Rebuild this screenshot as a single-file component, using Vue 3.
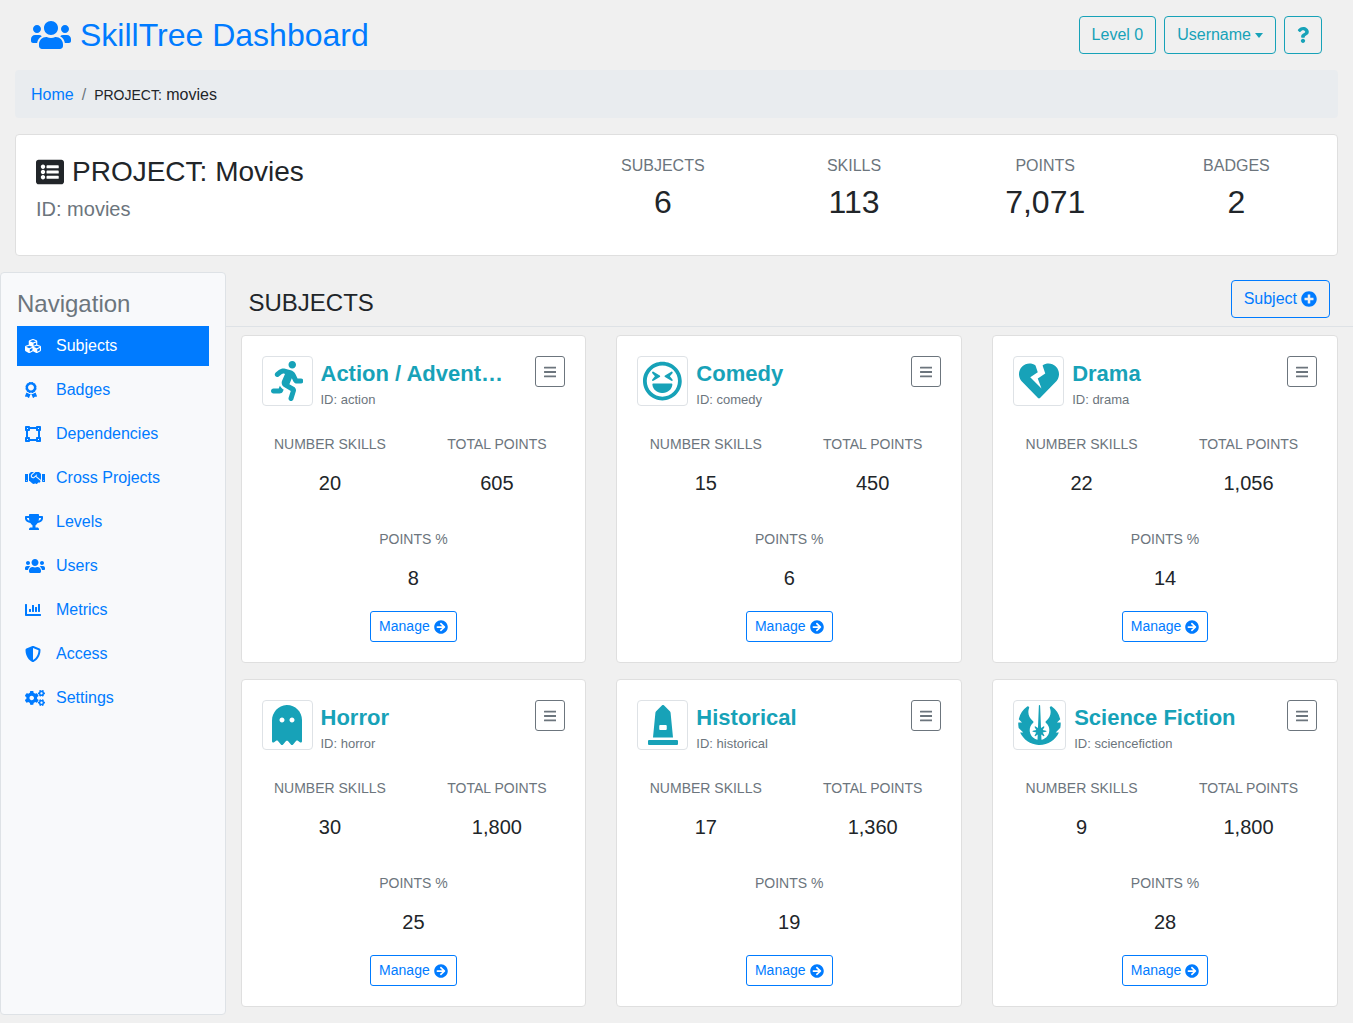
<script setup>
const icons = {
  users: { w: 640, d: 'M96 224c35.3 0 64-28.7 64-64s-28.7-64-64-64-64 28.7-64 64 28.7 64 64 64zm448 0c35.3 0 64-28.7 64-64s-28.7-64-64-64-64 28.7-64 64 28.7 64 64 64zm32 32h-64c-17.6 0-33.5 7.1-45.1 18.6 40.3 22.1 68.9 62 75.1 109.4h66c17.7 0 32-14.3 32-32v-32c0-35.3-28.7-64-64-64zm-256 0c61.9 0 112-50.1 112-112S381.9 32 320 32 208 82.1 208 144s50.1 112 112 112zm76.8 32h-8.3c-20.8 10-43.9 16-68.5 16s-47.6-6-68.5-16h-8.3C179.6 288 128 339.6 128 403.2V432c0 26.5 21.5 48 48 48h288c26.5 0 48-21.5 48-48v-28.8c0-63.6-51.6-115.2-115.2-115.2zm-223.7-13.4C161.5 263.1 145.6 256 128 256H64c-35.3 0-64 28.7-64 64v32c0 17.7 14.3 32 32 32h65.9c6.3-47.4 34.9-87.3 75.2-109.4z' },
  question: { w: 384, d: 'M202.021 0C122.202 0 70.503 32.703 29.914 91.026c-7.363 10.58-5.093 25.086 5.178 32.874l43.138 32.709c10.373 7.865 25.132 6.026 33.253-4.148 25.049-31.381 43.63-49.449 82.757-49.449 30.764 0 68.816 19.799 68.816 49.631 0 22.552-18.617 34.134-48.993 51.164-35.423 19.86-82.299 44.576-82.299 106.405V320c0 13.255 10.745 24 24 24h72.471c13.255 0 24-10.745 24-24v-5.773c0-42.86 125.268-44.645 125.268-160.627C377.504 66.256 286.902 0 202.021 0zM192 373.459c-38.196 0-69.271 31.075-69.271 69.271 0 38.195 31.075 69.27 69.271 69.27s69.271-31.075 69.271-69.271-31.075-69.27-69.271-69.27z' },
  bars: { w: 448, d: 'M16 132h416c8.837 0 16-7.163 16-16V76c0-8.837-7.163-16-16-16H16C7.163 60 0 67.163 0 76v40c0 8.837 7.163 16 16 16zm0 160h416c8.837 0 16-7.163 16-16v-40c0-8.837-7.163-16-16-16H16c-8.837 0-16 7.163-16 16v40c0 8.837 7.163 16 16 16zm0 160h416c8.837 0 16-7.163 16-16v-40c0-8.837-7.163-16-16-16H16c-8.837 0-16 7.163-16 16v40c0 8.837 7.163 16 16 16z' },
  arrowCircle: { w: 512, d: 'M256 8c137 0 248 111 248 248S393 504 256 504 8 393 8 256 119 8 256 8zm-28.9 143.6l75.5 72.4H120c-13.3 0-24 10.7-24 24v16c0 13.3 10.7 24 24 24h182.6l-75.5 72.4c-9.7 9.3-9.9 24.8-.4 34.3l11 10.9c9.4 9.4 24.6 9.4 33.9 0L404.3 273c9.4-9.4 9.4-24.6 0-33.9L271.6 106.3c-9.4-9.4-24.6-9.4-33.9 0l-11 10.9c-9.5 9.6-9.3 25.1.4 34.4z' },
  plusCircle: { w: 512, d: 'M256 8C119 8 8 119 8 256s111 248 248 248 248-111 248-248S393 8 256 8zm144 276c0 6.6-5.4 12-12 12h-92v92c0 6.6-5.4 12-12 12h-56c-6.6 0-12-5.4-12-12v-92h-92c-6.6 0-12-5.4-12-12v-56c0-6.6 5.4-12 12-12h92v-92c0-6.6 5.4-12 12-12h56c6.6 0 12 5.4 12 12v92h92c6.6 0 12 5.4 12 12v56z' },
  listAlt: { w: 512, d: 'M464 480H48c-26.51 0-48-21.49-48-48V80c0-26.51 21.49-48 48-48h416c26.51 0 48 21.49 48 48v352c0 26.51-21.49 48-48 48zM128 120c-22.091 0-40 17.909-40 40s17.909 40 40 40 40-17.909 40-40-17.909-40-40-40zm0 96c-22.091 0-40 17.909-40 40s17.909 40 40 40 40-17.909 40-40-17.909-40-40-40zm0 96c-22.091 0-40 17.909-40 40s17.909 40 40 40 40-17.909 40-40-17.909-40-40-40zm288-136v-32c0-6.627-5.373-12-12-12H204c-6.627 0-12 5.373-12 12v32c0 6.627 5.373 12 12 12h200c6.627 0 12-5.373 12-12zm0 96v-32c0-6.627-5.373-12-12-12H204c-6.627 0-12 5.373-12 12v32c0 6.627 5.373 12 12 12h200c6.627 0 12-5.373 12-12zm0 96v-32c0-6.627-5.373-12-12-12H204c-6.627 0-12 5.373-12 12v32c0 6.627 5.373 12 12 12h200c6.627 0 12-5.373 12-12z' },
  cubes: { w: 512, d: 'M488.6 250.2L392 214V105.5c0-15-9.3-28.4-23.4-33.7l-100-37.5c-8.1-3.1-17.1-3.1-25.3 0l-100 37.5c-14.1 5.3-23.4 18.7-23.4 33.7V214l-96.6 36.2C9.3 255.5 0 268.9 0 283.9V394c0 13.6 7.7 26.1 19.9 32.2l100 50c10.1 5.1 22.1 5.1 32.2 0l103.9-52 103.9 52c10.1 5.1 22.1 5.1 32.2 0l100-50c12.2-6.1 19.9-18.6 19.9-32.2V283.9c0-15-9.3-28.4-23.4-33.7zM358 214.8l-85 31.9v-68.2l85-37v73.3zM154 104.1l102-38.2 102 38.2v.6l-102 41.4-102-41.4v-.6zm84 291.1l-85 42.5v-79.1l85-38.8v75.4zm0-112l-102 41.4-102-41.4v-.6l102-38.2 102 38.2v.6zm240 112l-85 42.5v-79.1l85-38.8v75.4zm0-112l-102 41.4-102-41.4v-.6l102-38.2 102 38.2v.6z' },
  award: { w: 384, d: 'M97.12 362.63c-8.69-8.69-4.16-6.24-25.12-11.85-9.51-2.55-17.87-7.45-25.43-13.32L1.2 448.7c-4.39 10.77 3.81 22.47 15.43 22.03l52.69-2.01L105.56 507c8 8.44 22.04 5.81 26.43-4.96l52.05-127.62c-10.84 6.04-22.87 9.58-35.31 9.58-19.5 0-37.82-7.59-51.61-21.37zM382.8 448.7l-45.37-111.24c-7.56 5.88-15.92 10.77-25.43 13.32-21.07 5.64-16.45 3.18-25.12 11.85-13.79 13.78-32.12 21.37-51.62 21.37-12.44 0-24.47-3.55-35.31-9.58L252 502.04c4.39 10.77 18.44 13.4 26.43 4.96l36.25-38.28 52.69 2.01c11.62.44 19.82-11.27 15.43-22.03zM263 340c15.28-15.55 17.03-14.21 38.79-20.14 13.89-3.79 24.75-14.84 28.47-28.98 7.48-28.4 5.54-24.97 25.95-45.75 10.17-10.35 14.14-25.44 10.42-39.58-7.47-28.38-7.48-24.42 0-52.83 3.72-14.14-.25-29.23-10.42-39.58-20.41-20.78-18.47-17.36-25.95-45.75-3.72-14.14-14.58-25.19-28.47-28.98-27.88-7.61-24.52-5.62-44.95-26.41-10.17-10.35-25-14.4-38.89-10.61-27.87 7.6-23.98 7.61-51.9 0-13.89-3.79-28.72.25-38.89 10.61-20.41 20.78-17.05 18.8-44.94 26.41-13.89 3.79-24.75 14.84-28.47 28.98-7.47 28.39-5.54 24.97-25.95 45.75-10.17 10.35-14.15 25.44-10.42 39.58 7.47 28.36 7.48 24.4 0 52.82-3.72 14.14.25 29.23 10.42 39.59 20.41 20.78 18.47 17.35 25.95 45.75 3.72 14.14 14.58 25.19 28.47 28.98C104.6 325.96 106.27 325 121 340c13.23 13.47 33.84 15.88 49.74 5.82a39.676 39.676 0 0 1 42.53 0c15.89 10.06 36.5 7.65 49.73-5.82zM97.66 175.96c0-53.03 42.24-96.02 94.34-96.02s94.34 42.99 94.34 96.02-42.24 96.02-94.34 96.02-94.34-42.99-94.34-96.02z' },
  vectorSquare: { w: 512, d: 'M512 128V32c0-17.67-14.33-32-32-32h-96c-17.67 0-32 14.33-32 32H160c0-17.67-14.33-32-32-32H32C14.33 0 0 14.33 0 32v96c0 17.67 14.33 32 32 32v192c-17.67 0-32 14.33-32 32v96c0 17.67 14.33 32 32 32h96c17.67 0 32-14.33 32-32h192c0 17.67 14.33 32 32 32h96c17.67 0 32-14.33 32-32v-96c0-17.67-14.33-32-32-32V160c17.67 0 32-14.33 32-32zm-96-64h32v32h-32V64zM64 64h32v32H64V64zm32 384H64v-32h32v32zm352 0h-32v-32h32v32zm-32-96h-32c-17.67 0-32 14.33-32 32v32H160v-32c0-17.67-14.33-32-32-32H96V160h32c17.67 0 32-14.33 32-32V96h192v32c0 17.67 14.33 32 32 32h32v192z' },
  handshake: { w: 640, d: 'M434.7 64h-85.9c-8 0-15.7 3-21.6 8.4l-98.3 90c-.1.1-.2.3-.3.4-16.6 15.6-16.3 40.5-2.1 56 12.7 13.9 39.4 17.6 56.1 2.7.1-.1.3-.1.4-.2l79.9-73.2c6.5-5.9 16.7-5.5 22.6 1 6 6.5 5.5 16.6-1 22.6l-26.1 23.9L504 313.8c2.9 2.4 5.5 5 7.9 7.7V128l-54.6-54.6c-5.9-6-14.1-9.4-22.6-9.4zM544 128.2v223.9c0 17.7 14.3 32 32 32h64V128.2h-96zm48 223.9c-8.8 0-16-7.2-16-16s7.2-16 16-16 16 7.2 16 16-7.2 16-16 16zM0 384h64c17.7 0 32-14.3 32-32V128.2H0V384zm48-63.9c8.8 0 16 7.2 16 16s-7.2 16-16 16-16-7.2-16-16c0-8.9 7.2-16 16-16zm435.9 18.6L334.6 217.5l-30 27.5c-29.7 27.1-75.2 24.5-101.7-4.4-26.9-29.4-24.8-74.9 4.4-101.7L289.1 64h-83.8c-8.5 0-16.6 3.4-22.6 9.4L128 128v223.9h18.3l90.5 81.9c27.4 22.3 67.7 18.1 90-9.3l.2-.2 17.9 15.5c15.9 13 39.4 10.5 52.3-5.4l31.4-38.6 5.4 4.4c13.7 11.1 33.9 9.1 45-4.7l9.5-11.7c11.2-13.8 9.1-33.9-4.6-45.1z' },
  trophy: { w: 576, d: 'M552 64H448V24c0-13.3-10.7-24-24-24H152c-13.3 0-24 10.7-24 24v40H24C10.7 64 0 74.7 0 88v56c0 35.7 22.5 72.4 61.9 100.7 31.5 22.7 69.8 37.1 110 41.7C203.3 338.5 240 360 240 360v72h-48c-35.3 0-64 20.7-64 56v12c0 6.6 5.4 12 12 12h296c6.6 0 12-5.4 12-12v-12c0-35.3-28.7-56-64-56h-48v-72s36.7-21.5 68.1-73.6c40.3-4.6 78.6-19 110-41.7 39.3-28.3 61.9-65 61.9-100.7V88c0-13.3-10.7-24-24-24zM99.3 192.8C74.9 175.2 64 155.6 64 144v-16h64.2c1 32.6 5.8 61.2 12.8 86.2-15.1-5.2-29.2-12.4-41.7-21.4zM512 144c0 16.1-17.7 36.1-35.3 48.8-12.5 9-26.7 16.2-41.8 21.4 7-25 11.8-53.6 12.8-86.2H512v16z' },
  chartBar: { w: 512, d: 'M332.8 320h38.4c6.4 0 12.8-6.4 12.8-12.8V172.8c0-6.4-6.4-12.8-12.8-12.8h-38.4c-6.4 0-12.8 6.4-12.8 12.8v134.4c0 6.4 6.4 12.8 12.8 12.8zm96 0h38.4c6.4 0 12.8-6.4 12.8-12.8V76.8c0-6.4-6.4-12.8-12.8-12.8h-38.4c-6.4 0-12.8 6.4-12.8 12.8v230.4c0 6.4 6.4 12.8 12.8 12.8zm-288 0h38.4c6.4 0 12.8-6.4 12.8-12.8v-70.4c0-6.4-6.4-12.8-12.8-12.8h-38.4c-6.4 0-12.8 6.4-12.8 12.8v70.4c0 6.4 6.4 12.8 12.8 12.8zm96 0h38.4c6.4 0 12.8-6.4 12.8-12.8V108.8c0-6.4-6.4-12.8-12.8-12.8h-38.4c-6.4 0-12.8 6.4-12.8 12.8v198.4c0 6.4 6.4 12.8 12.8 12.8zM496 384H64V80c0-8.84-7.16-16-16-16H16C7.16 64 0 71.16 0 80v336c0 17.67 14.33 32 32 32h464c8.84 0 16-7.16 16-16v-32c0-8.84-7.16-16-16-16z' },
  shield: { w: 512, d: 'M466.5 83.7l-192-80a48.15 48.15 0 0 0-36.9 0l-192 80C27.7 91.1 16 108.6 16 128c0 198.5 114.5 335.7 221.5 380.3 11.8 4.9 25.1 4.9 36.9 0C360.1 472.6 496 349.3 496 128c0-19.4-11.7-36.9-29.5-44.3zM256.1 446.3l-.1-381 175.9 73.3c-3.3 151.4-82.1 261.1-175.8 307.7z' },
  cogs: { w: 640, d: 'M512.1 191l-8.2 14.3c-3 5.3-9.4 7.5-15.1 5.4-11.8-4.4-22.6-10.7-32.1-18.6-4.6-3.8-5.8-10.5-2.8-15.7l8.2-14.3c-6.9-8-12.3-17.3-15.9-27.4h-16.5c-6 0-11.2-4.3-12.2-10.3-2-12-2.1-24.6 0-37.1 1-6 6.2-10.4 12.2-10.4h16.5c3.6-10.1 9-19.4 15.9-27.4l-8.2-14.3c-3-5.2-1.9-11.9 2.8-15.7 9.5-7.9 20.4-14.2 32.1-18.6 5.7-2.1 12.1.1 15.1 5.4l8.2 14.3c10.5-1.9 21.2-1.9 31.7 0L552 6.3c3-5.3 9.4-7.5 15.1-5.4 11.8 4.4 22.6 10.7 32.1 18.6 4.6 3.8 5.8 10.5 2.8 15.7l-8.2 14.3c6.9 8 12.3 17.3 15.9 27.4h16.5c6 0 11.2 4.3 12.2 10.3 2 12 2.1 24.6 0 37.1-1 6-6.2 10.4-12.2 10.4h-16.5c-3.6 10.1-9 19.4-15.9 27.4l8.2 14.3c3 5.2 1.9 11.9-2.8 15.7-9.5 7.9-20.4 14.2-32.1 18.6-5.7 2.1-12.1-.1-15.1-5.4l-8.2-14.3c-10.4 1.9-21.2 1.9-31.7 0zm-10.5-58.8c38.5 29.6 82.4-14.3 52.8-52.8-38.5-29.7-82.4 14.3-52.8 52.8zM386.3 286.1l33.7 16.8c10.1 5.8 14.5 18.1 10.5 29.1-8.9 24.2-26.4 46.4-42.6 65.8-7.4 8.9-20.2 11.1-30.3 5.3l-29.1-16.8c-16 13.7-34.6 24.6-54.9 31.7v33.6c0 11.6-8.3 21.6-19.7 23.6-24.6 4.2-50.4 4.4-75.9 0-11.5-2-20-11.9-20-23.6V418c-20.3-7.2-38.9-18-54.9-31.7L74 403c-10 5.8-22.9 3.6-30.3-5.3-16.2-19.4-33.3-41.6-42.2-65.7-4-10.9.4-23.2 10.5-29.1l33.3-16.8c-3.9-20.9-3.9-42.4 0-63.4L12 205.8c-10.1-5.8-14.6-18.1-10.5-29 8.9-24.2 26-46.4 42.2-65.8 7.4-8.9 20.2-11.1 30.3-5.3l29.1 16.8c16-13.7 34.6-24.6 54.9-31.7V57.1c0-11.5 8.2-21.5 19.6-23.5 24.6-4.2 50.5-4.4 76-.1 11.5 2 20 11.9 20 23.6v33.6c20.3 7.2 38.9 18 54.9 31.7l29.1-16.8c10-5.8 22.9-3.6 30.3 5.3 16.2 19.4 33.2 41.6 42.1 65.8 4 10.9.1 23.2-10 29.1l-33.7 16.8c3.9 21 3.9 42.5 0 63.5zm-117.6 21.1c59.2-77-28.7-164.9-105.7-105.7-59.2 77 28.7 164.9 105.7 105.7zM512.1 490l-8.2 14.3c-3 5.3-9.4 7.5-15.1 5.4-11.8-4.4-22.6-10.7-32.1-18.6-4.6-3.8-5.8-10.5-2.8-15.7l8.2-14.3c-6.9-8-12.3-17.3-15.9-27.4h-16.5c-6 0-11.2-4.3-12.2-10.3-2-12-2.1-24.6 0-37.1 1-6 6.2-10.4 12.2-10.4h16.5c3.6-10.1 9-19.4 15.9-27.4l-8.2-14.3c-3-5.2-1.9-11.9 2.8-15.7 9.5-7.9 20.4-14.2 32.1-18.6 5.7-2.1 12.1.1 15.1 5.4l8.2 14.3c10.5-1.9 21.2-1.9 31.7 0L552 305.3c3-5.3 9.4-7.5 15.1-5.4 11.8 4.4 22.6 10.7 32.1 18.6 4.6 3.8 5.8 10.5 2.8 15.7l-8.2 14.3c6.9 8 12.3 17.3 15.9 27.4h16.5c6 0 11.2 4.3 12.2 10.3 2 12 2.1 24.6 0 37.1-1 6-6.2 10.4-12.2 10.4h-16.5c-3.6 10.1-9 19.4-15.9 27.4l8.2 14.3c3 5.2 1.9 11.9-2.8 15.7-9.5 7.9-20.4 14.2-32.1 18.6-5.7 2.1-12.1-.1-15.1-5.4l-8.2-14.3c-10.4 1.9-21.2 1.9-31.7 0zm-10.5-58.8c38.5 29.6 82.4-14.3 52.8-52.8-38.5-29.7-82.4 14.3-52.8 52.8z' },
  running: { w: 416, d: 'M272 96c26.51 0 48-21.49 48-48S298.51 0 272 0s-48 21.49-48 48 21.49 48 48 48zM113.69 317.47l-14.8 34.52H32c-17.67 0-32 14.33-32 32s14.33 32 32 32h77.45c19.25 0 36.58-11.44 44.11-29.09l8.79-20.52-10.67-6.3c-17.32-10.23-30.06-25.37-37.99-42.61zM384 223.99h-44.03l-26.06-53.25c-12.5-25.55-35.45-44.23-61.78-50.94l-71.08-21.14c-28.3-6.8-57.77-.55-80.84 17.14l-39.67 30.41c-14.03 10.75-16.69 30.83-5.94 44.86s30.84 16.69 44.86 5.94l39.66-30.41c7.67-5.89 17.44-8 25.27-6.14l14.7 4.37-37.46 87.39c-12.62 29.48-1.31 64.01 26.3 80.31l84.98 50.17-27.47 87.73c-5.28 16.86 4.11 34.82 20.97 40.09 3.19 1 6.41 1.48 9.58 1.48 13.61 0 26.23-8.77 30.52-22.45l31.64-101.06c5.91-20.77-2.89-43.08-21.64-54.39l-61.24-36.14 31.31-78.28 20.27 41.43c8 16.34 24.92 26.89 43.11 26.89H384c17.67 0 32-14.33 32-32s-14.33-31.99-32-31.99z' },
  laugh: { w: 496, d: 'M248 8C111 8 0 119 0 256s111 248 248 248 248-111 248-248S385 8 248 8zm141.4 389.4c-37.8 37.8-88 58.6-141.4 58.6s-103.6-20.8-141.4-58.6S48 309.4 48 256s20.8-103.6 58.6-141.4S194.6 56 248 56s103.6 20.8 141.4 58.6S448 202.6 448 256s-20.8 103.6-58.6 141.4zM343.6 196l33.6-40.3c8.6-10.3-3.8-24.8-15.4-18l-80 48c-7.8 4.7-7.8 15.9 0 20.6l80 48c11.5 6.8 24-7.6 15.4-18L343.6 196zm-209.4 58.3l80-48c7.8-4.7 7.8-15.9 0-20.6l-80-48c-11.6-6.9-24 7.7-15.4 18l33.6 40.3-33.6 40.3c-8.7 10.4 3.8 24.8 15.4 18zM362.4 288H133.6c-8.2 0-14.5 7-13.5 15 7.5 59.2 58.9 105 121.1 105h13.6c62.2 0 113.6-45.8 121.1-105 1-8-5.3-15-13.5-15z' },
  heartBroken: { w: 512, d: 'M473.7 73.8l-2.4-2.5c-46-47-118-51.7-169.6-14.8L336 159.9l-96 64 48 128-144-144 96-64-28.6-86.5C159.7 19.6 87 24 40.7 71.4l-2.4 2.4C-10.4 123.6-12.5 202.9 31 256l212.1 218.6c7.1 7.3 18.6 7.3 25.7 0L481 255.9c43.5-53 41.4-132.3-7.3-182.1z' },
  ghost: { w: 384, d: 'M186.1.09C81.01 3.24 0 94.92 0 200.05v263.92c0 14.26 17.23 21.39 27.31 11.31l24.92-18.53c6.66-4.95 16-3.99 21.51 2.21l42.95 48.35c6.25 6.25 16.38 6.25 22.63 0l40.72-45.85c6.37-7.17 17.56-7.17 23.92 0l40.72 45.85c6.25 6.25 16.38 6.25 22.63 0l42.95-48.35c5.51-6.2 14.85-7.17 21.51-2.21l24.92 18.53c10.08 10.08 27.31 2.94 27.31-11.31V192C384 84 294.83-3.17 186.1.09zM128 224c-17.67 0-32-14.33-32-32s14.33-32 32-32 32 14.33 32 32-14.33 32-32 32zm128 0c-17.67 0-32-14.33-32-32s14.33-32 32-32 32 14.33 32 32-14.33 32-32 32z' },
  monument: { w: 384, d: 'M368 448H16c-8.84 0-16 7.16-16 16v32c0 8.84 7.16 16 16 16h352c8.84 0 16-7.16 16-16v-32c0-8.84-7.16-16-16-16zm-78.86-347.26a31.97 31.97 0 0 0-9.21-19.44L203.31 4.69c-6.25-6.25-16.38-6.25-22.63 0l-76.6 76.61a31.97 31.97 0 0 0-9.21 19.44L64 416h256l-30.86-315.26zM240 307.2c0 6.4-6.4 12.8-12.8 12.8h-70.4c-6.4 0-12.8-6.4-12.8-12.8v-38.4c0-6.4 6.4-12.8 12.8-12.8h70.4c6.4 0 12.8 6.4 12.8 12.8v38.4z' },
  jedi: { w: 576, d: 'M535.95308,352c-42.64069,94.17188-137.64086,160-247.9848,160q-6.39844,0-12.84377-.29688C171.15558,506.9375,81.26481,442.23438,40.01474,352H79.93668L21.3272,293.40625a264.82522,264.82522,0,0,1-5.10938-39.42187,273.6653,273.6653,0,0,1,.5-29.98438H63.93665L22.546,182.625A269.79782,269.79782,0,0,1,130.51489,20.54688a16.06393,16.06393,0,0,1,9.28127-3,16.36332,16.36332,0,0,1,13.5,7.25,16.02739,16.02739,0,0,1,1.625,15.09374,138.387,138.387,0,0,0-9.84376,51.26563c0,45.10937,21.04691,86.57813,57.71885,113.73437a16.29989,16.29989,0,0,1,1.20313,25.39063c-26.54692,23.98437-41.17194,56.5-41.17194,91.57813,0,60.03124,42.95319,110.28124,99.89079,121.92187l2.5-65.26563L238.062,397a8.33911,8.33911,0,0,1-10-.75,8.025,8.025,0,0,1-1.39063-9.9375l20.125-33.76562-42.06257-8.73438a7.9898,7.9898,0,0,1,0-15.65625l42.06257-8.71875-20.10941-33.73438a7.99122,7.99122,0,0,1,11.35939-10.71874L268.437,295.64062,279.95265,7.67188a7.97138,7.97138,0,0,1,8-7.67188h.04687a8.02064,8.02064,0,0,1,7.95314,7.70312L307.48394,295.625l30.39068-20.67188a8.08327,8.08327,0,0,1,10,.8125,7.99866,7.99866,0,0,1,1.39062,9.90626L329.12461,319.4375l42.07819,8.73438a7.99373,7.99373,0,0,1,0,15.65624l-42.07819,8.71876,20.1094,33.73437a7.97791,7.97791,0,0,1-1.32812,9.92187A8.25739,8.25739,0,0,1,337.87462,397L310.7027,378.53125l2.5,65.34375c48.48446-9.40625,87.57828-48.15625,97.31267-96.5A123.52652,123.52652,0,0,0,371.9528,230.29688a16.30634,16.30634,0,0,1,1.20313-25.42188c36.65631-27.17188,57.6876-68.60938,57.6876-113.73438a138.01689,138.01689,0,0,0-9.85939-51.3125,15.98132,15.98132,0,0,1,1.60937-15.09374,16.36914,16.36914,0,0,1,13.5-7.23438,16.02453,16.02453,0,0,1,9.25,2.98438A271.26947,271.26947,0,0,1,553.25,182.76562L512.01533,224h46.9845c.3125,5.375.5,10.3125.5,15.35938,0,17.95312-1.79688,35.82812-5.10938,53.26562L496.0465,352Z' },
}

const box = (name) => `0 0 ${icons[name].w} 512`

const navItems = [
  { label: 'Subjects', icon: 'cubes', active: true },
  { label: 'Badges', icon: 'award' },
  { label: 'Dependencies', icon: 'vectorSquare' },
  { label: 'Cross Projects', icon: 'handshake' },
  { label: 'Levels', icon: 'trophy' },
  { label: 'Users', icon: 'users' },
  { label: 'Metrics', icon: 'chartBar' },
  { label: 'Access', icon: 'shield' },
  { label: 'Settings', icon: 'cogs' },
]

const totals = [
  { label: 'SUBJECTS', value: '6' },
  { label: 'SKILLS', value: '113' },
  { label: 'POINTS', value: '7,071' },
  { label: 'BADGES', value: '2' },
]

const subjects = [
  { id: 'action', name: 'Action / Advent…', icon: 'running', skills: '20', points: '605', percent: '8' },
  { id: 'comedy', name: 'Comedy', icon: 'laugh', skills: '15', points: '450', percent: '6' },
  { id: 'drama', name: 'Drama', icon: 'heartBroken', skills: '22', points: '1,056', percent: '14' },
  { id: 'horror', name: 'Horror', icon: 'ghost', skills: '30', points: '1,800', percent: '25' },
  { id: 'historical', name: 'Historical', icon: 'monument', skills: '17', points: '1,360', percent: '19' },
  { id: 'sciencefiction', name: 'Science Fiction', icon: 'jedi', skills: '9', points: '1,800', percent: '28' },
]
</script>

<template>
  <div class="dashboard">
    <header class="topbar">
      <h1 class="brand">
        <a href="#">
          <svg class="icon" :viewBox="box('users')" aria-hidden="true"><path :d="icons.users.d" /></svg>
          <span>SkillTree Dashboard</span>
        </a>
      </h1>
      <div class="actions">
        <button type="button" class="btn btn-info">Level 0</button>
        <button type="button" class="btn btn-info">Username<span class="caret"></span></button>
        <button type="button" class="btn btn-info" aria-label="Help">
          <svg class="icon" :viewBox="box('question')" aria-hidden="true"><path :d="icons.question.d" /></svg>
        </button>
      </div>
    </header>

    <nav class="breadcrumb" aria-label="Breadcrumb">
      <a href="#">Home</a>
      <span class="slash">/</span>
      <span><span class="crumb-type">PROJECT:</span> movies</span>
    </nav>

    <section class="project">
      <div class="project-name">
        <h2>
          <svg class="icon" :viewBox="box('listAlt')" aria-hidden="true"><path :d="icons.listAlt.d" /></svg>
          <span>PROJECT: Movies</span>
        </h2>
        <p>ID: movies</p>
      </div>
      <div class="totals">
        <div v-for="total in totals" :key="total.label">
          <div class="total-label">{{ total.label }}</div>
          <div class="total-value">{{ total.value }}</div>
        </div>
      </div>
    </section>

    <div class="body">
      <nav class="sidebar" aria-label="Project">
        <h3>Navigation</h3>
        <ul>
          <li v-for="item in navItems" :key="item.label">
            <a href="#" :class="{ active: item.active }">
              <span class="nav-icon">
                <svg class="icon" :viewBox="box(item.icon)" aria-hidden="true"><path :d="icons[item.icon].d" /></svg>
              </span>
              <span>{{ item.label }}</span>
            </a>
          </li>
        </ul>
      </nav>

      <main>
        <div class="section-head">
          <h2>SUBJECTS</h2>
          <button type="button" class="btn btn-primary">
            Subject
            <svg class="icon" :viewBox="box('plusCircle')" aria-hidden="true"><path :d="icons.plusCircle.d" /></svg>
          </button>
        </div>

        <div class="cards">
          <article v-for="subject in subjects" :key="subject.id" class="card">
            <div class="card-head">
              <span class="thumb">
                <svg class="icon" :viewBox="box(subject.icon)" aria-hidden="true"><path :d="icons[subject.icon].d" /></svg>
              </span>
              <div class="card-title">
                <h3><a href="#">{{ subject.name }}</a></h3>
                <p>ID: {{ subject.id }}</p>
              </div>
              <button type="button" class="btn btn-sm btn-secondary" :aria-label="`Options for ${subject.id}`">
                <svg class="icon" :viewBox="box('bars')" aria-hidden="true"><path :d="icons.bars.d" /></svg>
              </button>
            </div>
            <dl class="stats">
              <div>
                <dt>NUMBER SKILLS</dt>
                <dd>{{ subject.skills }}</dd>
              </div>
              <div>
                <dt>TOTAL POINTS</dt>
                <dd>{{ subject.points }}</dd>
              </div>
              <div class="wide">
                <dt>POINTS %</dt>
                <dd>{{ subject.percent }}</dd>
              </div>
            </dl>
            <a href="#" class="btn btn-sm btn-primary">
              Manage
              <svg class="icon" :viewBox="box('arrowCircle')" aria-hidden="true"><path :d="icons.arrowCircle.d" /></svg>
            </a>
          </article>
        </div>
      </main>
    </div>
  </div>
</template>

<style>
body {
  margin: 0;
  background: #f0f0f0;
}
</style>

<style scoped>
.dashboard {
  color: #212529;
  font-family: "Liberation Sans", Arial, sans-serif;
  font-size: 16px;
  line-height: 24px;
}

.dashboard * {
  box-sizing: border-box;
}

h1,
h2,
h3,
p,
ul,
dl,
dd {
  margin: 0;
  padding: 0;
  font-weight: 400;
}

a {
  color: #007bff;
  text-decoration: none;
}

.icon {
  display: block;
  flex: none;
  width: auto;
  height: 1em;
  fill: currentColor;
}

.btn {
  display: inline-flex;
  align-items: center;
  gap: 4px;
  padding: 6px 12px;
  border: 1px solid currentColor;
  border-radius: 4px;
  background: transparent;
  font-family: inherit;
  font-size: 16px;
  line-height: 24px;
  cursor: pointer;
}

.btn-sm {
  padding: 4px 8px;
  border-radius: 3px;
  font-size: 14px;
  line-height: 21px;
}

.btn-info {
  color: #17a2b8;
}

.btn-primary {
  color: #007bff;
}

.btn-secondary {
  min-height: 31px;
  color: #6c757d;
}

.caret {
  border-top: 5px solid;
  border-right: 4px solid transparent;
  border-left: 4px solid transparent;
}

.topbar {
  display: flex;
  align-items: center;
  justify-content: space-between;
  padding: 16px 31px;
}

.brand a {
  display: flex;
  align-items: center;
  gap: 9px;
  font-size: 32px;
  line-height: 38px;
}

.actions {
  display: flex;
  gap: 8px;
}

.breadcrumb {
  display: flex;
  gap: 8px;
  margin: 0 15px 16px;
  padding: 13px 16px 11px;
  border-radius: 4px;
  background: #e9ecef;
}

.slash {
  color: #6c757d;
}

.crumb-type {
  font-size: 14px;
}

.project {
  display: grid;
  grid-template-columns: minmax(0, 5fr) minmax(0, 7fr);
  margin: 0 15px 16px;
  padding: 20px 5px 34px;
  border: 1px solid #dfdfdf;
  border-radius: 4px;
  background: #fff;
}

.project-name {
  padding: 0 15px;
}

.project-name h2 {
  display: flex;
  align-items: center;
  gap: 8px;
  font-size: 28px;
  line-height: 34px;
}

.project-name p {
  margin-top: 8px;
  color: #6c757d;
  font-size: 20px;
}

.totals {
  display: grid;
  grid-template-columns: repeat(4, 1fr);
  text-align: center;
}

.total-label {
  color: #6c757d;
  line-height: 22px;
}

.total-value {
  margin-top: 6px;
  font-size: 32px;
  line-height: 38px;
}

.body {
  display: grid;
  grid-template-columns: minmax(0, 1fr) minmax(0, 5fr);
  padding-bottom: 8px;
}

.sidebar {
  padding: 16px;
  border: 1px solid #dee2e6;
  border-radius: 4px;
  background: #f8f9fb;
}

.sidebar h3 {
  margin-bottom: 8px;
  color: #6c757d;
  font-size: 24px;
  line-height: 29px;
}

.sidebar ul {
  display: grid;
  gap: 4px;
  list-style: none;
}

.sidebar a {
  display: flex;
  align-items: center;
  padding: 8px;
}

.sidebar .active {
  background: #007bff;
  color: #fff;
}

.nav-icon {
  width: 31px;
}

.section-head {
  display: flex;
  align-items: flex-end;
  justify-content: space-between;
  padding: 8px 23px;
  border-bottom: 1px solid #dee2e6;
}

.section-head h2 {
  font-size: 24px;
  line-height: 30px;
}

.cards {
  display: grid;
  grid-template-columns: repeat(3, minmax(0, 1fr));
  gap: 16px 30px;
  padding: 8px 15px;
}

.card {
  padding: 20px;
  border: 1px solid #dfdfdf;
  border-radius: 4px;
  background: #fff;
  text-align: center;
}

.card-head {
  display: flex;
  align-items: flex-start;
  gap: 8px;
  margin-bottom: 23px;
  text-align: left;
}

.thumb {
  display: flex;
  flex: none;
  justify-content: center;
  min-width: 51px;
  padding: 4px 3px;
  border: 1px solid #dee2e6;
  border-radius: 4px;
  color: #17a2b8;
  font-size: 40px;
}

.card-title {
  flex: 1;
  min-width: 0;
  padding-top: 5px;
}

.card-title h3 {
  overflow: hidden;
  color: #17a2b8;
  font-size: 22px;
  font-weight: 700;
  line-height: 26px;
  text-overflow: ellipsis;
  white-space: nowrap;
}

.card-title a {
  color: inherit;
}

.card-title p {
  margin-top: 3px;
  color: #6c757d;
  font-size: 13px;
  line-height: 20px;
}

.stats {
  display: grid;
  grid-template-columns: 1fr 1fr;
  gap: 33px 0;
  margin: 0 -15px 21px;
}

.wide {
  grid-column: 1 / -1;
}

.stats dt {
  color: #6c757d;
  font-size: 14px;
  line-height: 22px;
}

.stats dd {
  margin-top: 16px;
  font-size: 20px;
}

.card > .btn {
  vertical-align: top;
}
</style>
